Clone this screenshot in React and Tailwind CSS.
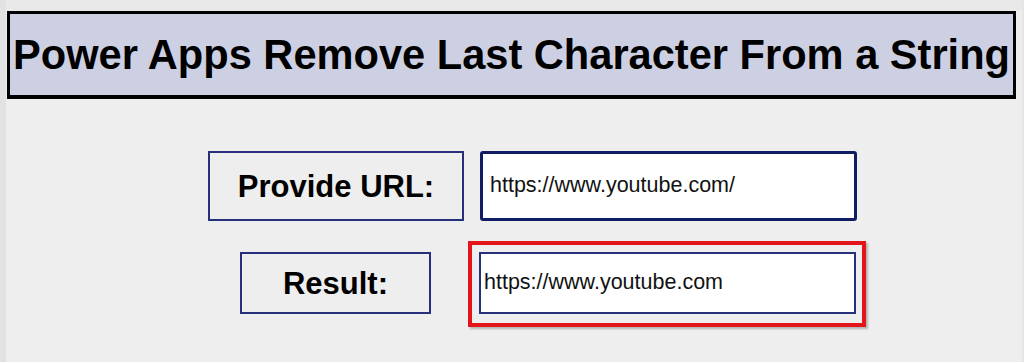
import React from "react";

const font = { fontFamily: '"Liberation Sans", Arial, sans-serif' };

export default function App() {
  return (
    <div
      className="w-[1024px] h-[362px] bg-[#eeeeee] flex overflow-hidden"
      style={font}
    >
      <div className="w-[6px] h-full bg-[#e2e2e2]" />
      <div className="flex-1 flex flex-col">
        <div className="h-[11px] bg-[#e9e9e9]" />
        <div className="ml-px mr-[6px] h-[88px] bg-[#cdd0e3] border-[3px] border-b-[4px] border-black flex items-center justify-center">
          <h1 className="text-[41.6px] font-bold text-black leading-none whitespace-nowrap">
            Power Apps Remove Last Character From a String
          </h1>
        </div>

        <div className="mt-[52px] ml-[202px] flex items-center gap-[16px]">
          <div className="w-[256px] h-[70px] border-2 border-[#27307a] flex items-center justify-center">
            <span className="text-[31px] font-bold text-black leading-none">
              Provide URL:
            </span>
          </div>
          <div className="w-[377px] h-[70px] bg-white border-[3px] border-[#101c63] rounded-[3px] flex items-center pl-[7px]">
            <span className="text-[21.5px] text-[#111111] leading-none">
              https://www.youtube.com/
            </span>
          </div>
        </div>

        <div className="mt-[20px] ml-[234px] flex items-start gap-[37px]">
          <div className="mt-[11px] w-[191px] h-[62px] border-2 border-[#27307a] flex items-center justify-center">
            <span className="text-[31px] font-bold text-black leading-none">
              Result:
            </span>
          </div>
          <div className="w-[398px] h-[86px] border-[4px] border-[#e3151a] shadow-[2px_2px_2px_rgba(0,0,0,0.25)] pl-[7px] pt-[7px]">
            <div className="w-[377px] h-[62px] bg-white border-2 border-[#27307a] flex items-center pl-[3px]">
              <span className="text-[21.5px] text-[#111111] leading-none">
                https://www.youtube.com
              </span>
            </div>
          </div>
        </div>
      </div>
      <div className="w-[2px] h-full bg-[#e6e6e6]" />
    </div>
  );
}
